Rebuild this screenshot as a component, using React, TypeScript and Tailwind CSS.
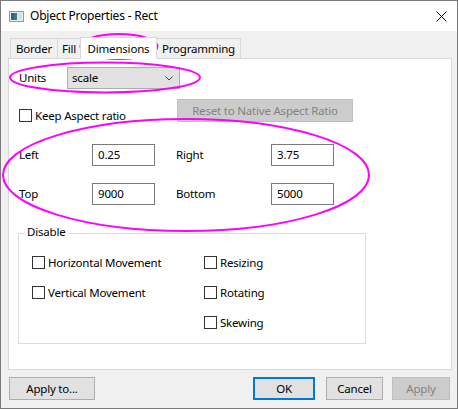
import React from 'react';

const font = "font-['Segoe_UI','Noto_Sans',sans-serif]";

function Check({ label, className = '' }: { label: string; className?: string }) {
  return (
    <div className={`flex items-center h-[13px] ${className}`}>
      <span className="w-[13px] h-[13px] border border-[#333333] bg-white shrink-0" />
      <span className="ml-[3px] leading-none whitespace-nowrap">{label}</span>
    </div>
  );
}

function Field({ value }: { value: string }) {
  return (
    <div className="w-[63px] h-[22px] border border-[#7a7a7a] bg-white flex items-center px-[5px] leading-none">
      {value}
    </div>
  );
}

function Btn({ label, w, variant = 'normal' }: { label: string; w: string; variant?: 'normal' | 'default' | 'disabled' }) {
  const cls =
    variant === 'default'
      ? 'border-2 border-[#0078d7] bg-[#e1e1e1] text-black'
      : variant === 'disabled'
      ? 'border border-[#bfbfbf] bg-[#cccccc] text-[#838383]'
      : 'border border-[#adadad] bg-[#e1e1e1] text-black';
  return <div className={`${w} h-[23px] flex items-center justify-center leading-none ${cls}`}>{label}</div>;
}

export default function App() {
  return (
    <div className={`relative w-[458px] h-[409px] border border-[#7a7a7a] bg-[#f0f0f0] flex flex-col text-[11.5px] tracking-[-0.2px] text-black ${font}`}>
      {/* title bar */}
      <div className="h-[30px] bg-white flex items-center shrink-0">
        <svg className="ml-[8px]" width="15" height="11" viewBox="0 0 15 11">
          <rect x="0.5" y="0.5" width="14" height="10" fill="#e8eef2" stroke="#8a9aa6" />
          <rect x="2" y="2" width="6" height="7" fill="#2f7f8f" />
          <rect x="2" y="2" width="3" height="7" fill="#3b5f86" />
          <rect x="9" y="2" width="4" height="7" fill="#cfe6d8" />
        </svg>
        <span className="ml-[6px] text-[12px] leading-none">Object Properties - Rect</span>
        <svg className="ml-auto mr-[10px]" width="11" height="11" viewBox="0 0 11 11">
          <path d="M0.5 0.5 L10.5 10.5 M10.5 0.5 L0.5 10.5" stroke="#000" strokeWidth="1" />
        </svg>
      </div>

      {/* tabs */}
      <div className="px-[7px] mt-[5px] flex flex-col">
        <div className="flex items-end h-[22px] pl-[2px]">
          <div className="w-[47px] h-[20px] flex items-center justify-center border-t border-l border-[#d9d9d9] leading-none">Border</div>
          <div className="w-[23px] h-[20px] flex items-center justify-center border-t border-l border-[#d9d9d9] leading-none">Fill</div>
          <div className="relative z-10 w-[77px] h-[22px] mb-[-1px] flex items-center justify-center bg-white border-t border-x border-[#d9d9d9] leading-none">
            Dimensions
          </div>
          <div className="w-[84px] h-[20px] flex items-center justify-center border-t border-r border-[#d9d9d9] leading-none">Programming</div>
        </div>

        {/* panel */}
        <div className="h-[312px] w-[444px] border border-[#d9d9d9] bg-white flex flex-col">
          <div className="mt-[8px] h-[22px] flex items-center pl-[10px]">
            <span className="w-[48px] leading-none">Units</span>
            <div className="w-[113px] h-[22px] border border-[#adadad] bg-[#e1e1e1] flex items-center pl-[4px] pr-[6px] leading-none">
              <span>scale</span>
              <svg className="ml-auto" width="8" height="5" viewBox="0 0 8 5">
                <path d="M0.5 0.5 L4 4 L7.5 0.5" fill="none" stroke="#444" strokeWidth="1" />
              </svg>
            </div>
          </div>

          <div className="mt-[10px] h-[23px] flex items-end pl-[10px]">
            <Check label="Keep Aspect ratio" className="w-[158px] mb-[0px]" />
            <div className="w-[176px] h-[23px] border border-[#bfbfbf] bg-[#cccccc] text-[#838383] flex items-center justify-center leading-none">
              Reset to Native Aspect Ratio
            </div>
          </div>

          <div className="mt-[22px] h-[22px] flex items-center pl-[10px]">
            <span className="w-[73px] leading-none">Left</span>
            <Field value="0.25" />
            <span className="ml-[21px] w-[95px] leading-none">Right</span>
            <Field value="3.75" />
          </div>

          <div className="mt-[17px] h-[22px] flex items-center pl-[10px]">
            <span className="w-[73px] leading-none">Top</span>
            <Field value="9000" />
            <span className="ml-[21px] w-[95px] leading-none">Bottom</span>
            <Field value="5000" />
          </div>

          {/* group box */}
          <div className="relative mt-[28px] ml-[9px] w-[348px] h-[111px] border border-[#dcdcdc]">
            <span className="absolute left-[5px] top-[-8px] bg-white px-[3px] leading-none">Disable</span>
            <div className="mt-[22px] ml-[13px] grid grid-cols-[172px_1fr] gap-y-[17px]">
              <Check label="Horizontal Movement" />
              <Check label="Resizing" />
              <Check label="Vertical Movement" />
              <Check label="Rotating" />
              <span />
              <Check label="Skewing" />
            </div>
          </div>
        </div>
      </div>

      {/* bottom buttons */}
      <div className="mt-[7px] flex items-center pl-[8px]">
        <Btn label="Apply to..." w="w-[86px]" />
        <div className="ml-[158px]">
          <Btn label="OK" w="w-[62px]" variant="default" />
        </div>
        <div className="ml-[11px]">
          <Btn label="Cancel" w="w-[57px]" />
        </div>
        <div className="ml-[9px]">
          <Btn label="Apply" w="w-[58px]" variant="disabled" />
        </div>
      </div>

      {/* magenta annotation ellipses */}
      <svg className="absolute left-[-1px] top-[-1px] pointer-events-none" width="458" height="409" viewBox="0 0 458 409">
        <ellipse cx="119" cy="46.5" rx="38.5" ry="12.5" fill="none" stroke="#ff00ff" strokeWidth="2" />
        <ellipse cx="105" cy="77.5" rx="95" ry="15" fill="none" stroke="#ff00ff" strokeWidth="2" />
        <ellipse cx="186" cy="175" rx="183" ry="56" fill="none" stroke="#ff00ff" strokeWidth="2" />
      </svg>
    </div>
  );
}
